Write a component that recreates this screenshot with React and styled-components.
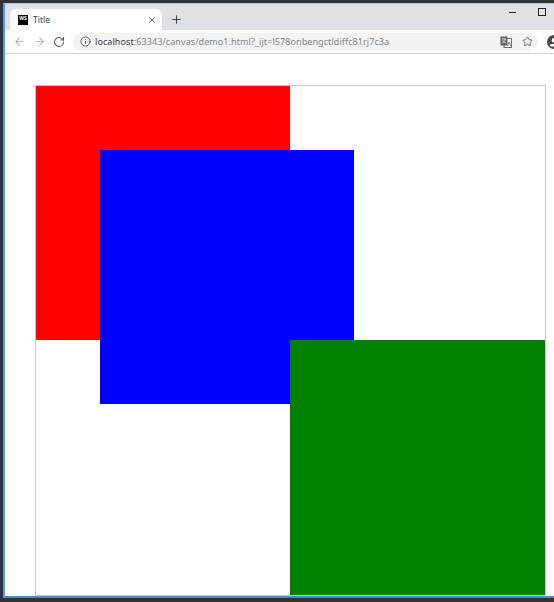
import React from "react";
import styled, { createGlobalStyle } from "styled-components";
import { X, Plus, ArrowLeft, ArrowRight, RotateCw, Info, Star } from "lucide-react";

const Global = createGlobalStyle`
  html, body { margin: 0; padding: 0; background: #2f3237; overflow: hidden; }
  * { box-sizing: border-box; }
`;

const Screen = styled.div`
  width: 554px;
  height: 602px;
  overflow: hidden;
  padding: 3px 0 4px 3px;
  background: #2f3237;
  font-family: "Noto Sans", "Open Sans", sans-serif;
`;

const Frame = styled.div`
  height: 595px;
  display: flex;
  flex-direction: column;
  background: #fff;
  border-top: 1px solid #a9c4dc;
  border-left: 2px solid #4a9fe6;
  border-bottom: 2px solid #3f8fd0;
`;

const TabStrip = styled.div`
  height: 26px;
  flex: none;
  display: flex;
  align-items: flex-end;
  gap: 8px;
  padding-left: 5px;
  background: #dee1e6;
  color: #3c4043;
`;

const Tab = styled.div`
  width: 152px;
  height: 21px;
  display: flex;
  align-items: center;
  padding: 0 5px 0 8px;
  background: #fff;
  border-radius: 6px 6px 0 0;
`;

const Favicon = styled.span`
  width: 10px;
  height: 10px;
  flex: none;
  padding-top: 1px;
  background: #000;
  color: #fff;
  font-size: 5px;
  font-weight: 700;
  line-height: 5px;
  text-align: center;
`;

const TabTitle = styled.span`
  flex: 1;
  margin-left: 5px;
  font-size: 8.5px;
  color: #3c4043;
`;

const NewTabIcon = styled(Plus)`
  flex: none;
  margin-bottom: 4px;
`;

const WindowButtons = styled.div`
  margin-left: auto;
  align-self: flex-start;
  display: flex;
  align-items: center;
  gap: 22px;
  height: 16px;
  padding-right: 8px;
`;

const MinimizeMark = styled.span`
  width: 7px;
  height: 1px;
  background: #222;
`;

const MaximizeMark = styled.span`
  width: 8px;
  height: 8px;
  border: 1px solid #222;
`;

const Toolbar = styled.div`
  height: 24px;
  flex: none;
  display: flex;
  align-items: center;
  padding-left: 4px;
  background: #fff;
  border-bottom: 1px solid #cfd1d4;
`;

const NavButton = styled.span`
  width: 20px;
  flex: none;
  display: flex;
  justify-content: center;
  color: ${(p) => (p.$dim ? "#b4b7bb" : "#55585c")};
`;

const Omnibox = styled.div`
  width: 465px;
  height: 18px;
  flex: none;
  margin-left: 4px;
  display: flex;
  align-items: center;
  padding: 0 5px 0 7px;
  background: #f1f3f4;
  border-radius: 9px;
  color: #55585c;
`;

const Url = styled.span`
  flex: 1;
  margin-left: 4px;
  font-size: 9px;
  letter-spacing: 0.08px;
  white-space: nowrap;
  color: #80868b;
`;

const Host = styled.span`
  color: #3c4043;
`;

const OmniIcons = styled.div`
  display: flex;
  align-items: center;
  gap: 10px;
`;

const AvatarIcon = styled.svg`
  width: 14px;
  height: 14px;
  flex: none;
  margin-left: 9px;
`;

const Page = styled.main`
  flex: 1;
  padding: 31px 0 0 30px;
  background: #fff;
`;

const Canvas = styled.div`
  width: 511px;
  height: 511px;
  display: grid;
  grid-template-columns: 64px 190px 64px 191px;
  grid-template-rows: 64px 190px 64px 191px;
  border: 1px solid #c8c8c8;
  background: #fff;
`;

const Shape = styled.div`
  grid-column: ${(p) => p.$col};
  grid-row: ${(p) => p.$row};
  background: ${(p) => p.$color};
`;

const TranslateIcon = () => (
  <svg width="12" height="12" viewBox="0 0 12 12">
    <rect x="4" y="2.5" width="7.5" height="9" fill="#fff" stroke="#6b6e72" />
    <rect x="0.5" y="0.5" width="7" height="9" fill="#5f6368" />
    <path d="M2 3h4M4 2v1M5.3 3C5 5 3.6 6.5 2 7M2.8 4.2C3.4 5.6 4.6 6.6 6 7" stroke="#fff" strokeWidth=".7" fill="none" />
    <path d="M7.5 10l1.6-4 1.6 4" stroke="#6b6e72" strokeWidth=".8" fill="none" />
  </svg>
);

const Avatar = () => (
  <AvatarIcon viewBox="0 0 14 14">
    <circle cx="7" cy="7" r="7" fill="#45484d" />
    <circle cx="7" cy="5.2" r="2.2" fill="#fff" />
    <path d="M2.6 10.4C4 8.6 10 8.6 11.4 10.4 10 12 4 12 2.6 10.4Z" fill="#fff" />
  </AvatarIcon>
);

export default function App() {
  return (
    <Screen>
      <Global />
      <Frame>
        <TabStrip>
          <Tab>
            <Favicon>WS</Favicon>
            <TabTitle>Title</TabTitle>
            <X size={10} strokeWidth={2} />
          </Tab>
          <NewTabIcon size={13} strokeWidth={1.8} />
          <WindowButtons>
            <MinimizeMark />
            <MaximizeMark />
          </WindowButtons>
        </TabStrip>
        <Toolbar>
          <NavButton $dim><ArrowLeft size={13} /></NavButton>
          <NavButton $dim><ArrowRight size={13} /></NavButton>
          <NavButton><RotateCw size={12} strokeWidth={2.2} /></NavButton>
          <Omnibox>
            <Info size={11} />
            <Url><Host>localhost</Host>:63343/canvas/demo1.html?_ijt=l578onbengctldiffc81rj7c3a</Url>
            <OmniIcons>
              <TranslateIcon />
              <Star size={11} strokeWidth={1.8} />
            </OmniIcons>
          </Omnibox>
          <Avatar />
        </Toolbar>
        <Page>
          <Canvas>
            <Shape $col="1 / 3" $row="1 / 3" $color="#ff0000" />
            <Shape $col="2 / 4" $row="2 / 4" $color="#0000ff" />
            <Shape $col="3 / 5" $row="3 / 5" $color="#008000" />
          </Canvas>
        </Page>
      </Frame>
    </Screen>
  );
}
